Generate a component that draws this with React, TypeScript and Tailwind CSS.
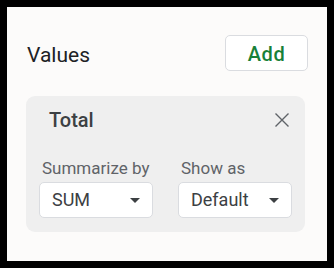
interface SelectBoxProps {
	labelProp: string;
	valueProp: string;
}

const SelectBox: React.FC<SelectBoxProps> = ({ labelProp, valueProp }) => {
	return (
		<div className="flex flex-col w-[114px]">
			<div className="pl-[3px] text-[17px] leading-[20px] text-[#5f6368]">{labelProp}</div>
			<div className="mt-1 h-[36px] flex items-center justify-between bg-white border border-[#dadce0] rounded-[5px] pl-3 pr-3">
				<span className="text-[18px] leading-[24px] text-[#3c4043]">{valueProp}</span>
				{/* Caret */}
				<svg width="10" height="5" viewBox="0 0 10 5" className="fill-[#3c4043]">
					<path d="M0 0 L10 0 L5 5 Z" />
				</svg>
			</div>
		</div>
	);
};

export default function App() {
	return (
		<div className="w-[334px] h-[268px] bg-black p-[7px] font-['Roboto',sans-serif]">
			<div className="w-[320px] h-[254px] bg-[#fcfbfa] pt-[28px] pl-[19px] pr-[19px]">
				{/* Header */}
				<div className="flex items-center justify-between">
					<div className="text-[21px] leading-[24px] text-[#202124] pt-[3px] pl-[1px]">Values</div>
					<button className="w-[83px] h-[36px] border border-[#dadce0] rounded-[5px] bg-white text-[20px] leading-[24px] pt-[1px] font-medium tracking-[0.5px] text-[#188038]">
						Add
					</button>
				</div>
				{/* Card */}
				<div className="mt-[25px] w-[279px] bg-[#efefef] rounded-[9px] pt-[12px] pb-[14px] pl-[13px] pr-[13px]">
					<div className="flex items-center justify-between pl-[10px] pr-[2px]">
						<div className="text-[20px] leading-[24px] font-medium text-[#3c4043]">Total</div>
						{/* Close */}
						<svg width="14" height="14" viewBox="0 0 14 14" className="stroke-[#5f6368] mr-[1px]">
							<path d="M0.5 0.5 L13.5 13.5 M13.5 0.5 L0.5 13.5" strokeWidth="1.4" fill="none" />
						</svg>
					</div>
					<div className="mt-[26px] flex gap-[25px]">
						<SelectBox labelProp="Summarize by" valueProp="SUM" />
						<SelectBox labelProp="Show as" valueProp="Default" />
					</div>
				</div>
			</div>
		</div>
	);
}
